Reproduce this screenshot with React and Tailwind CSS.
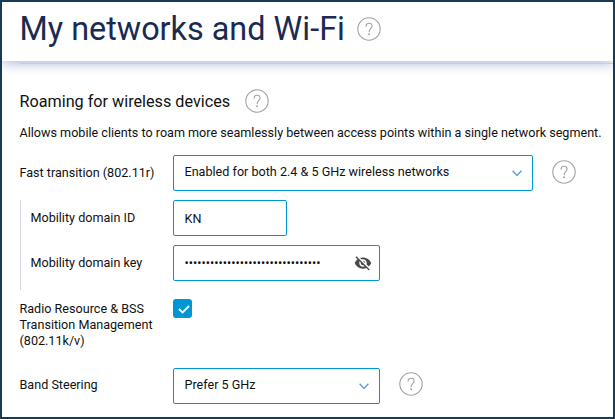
import { useState } from 'react';
import { MdVisibilityOff } from 'react-icons/md';

function HelpIcon() {
  return (
    <svg
      className="size-6 shrink-0 text-[#a3a3a3]"
      viewBox="0 0 24 24"
      fill="none"
      stroke="currentColor"
      strokeWidth="1.1"
      strokeLinecap="round"
    >
      <circle cx="12" cy="12" r="11.2" />
      <path d="M9.1 9.2c0-1.8 1.2-3 3-3s3 1.2 3 2.9c0 2.4-3 2.8-3 5.7" />
      <circle cx="12.1" cy="17.2" r="0.45" />
    </svg>
  );
}

function Select({ value, className }) {
  return (
    <button
      type="button"
      className={`flex h-9 items-center justify-between rounded-[2px] border border-[#0096d6] bg-white pr-2.5 pl-[10.5px] text-left ${className}`}
    >
      <span className="-mt-0.5">{value}</span>
      <svg
        className="mt-px h-[7px] w-[10px]"
        viewBox="0 0 10 7"
        fill="none"
        stroke="#5b9bd5"
        strokeWidth="1.3"
      >
        <path d="M0.6 0.8 5 5.5 9.4 0.8" />
      </svg>
    </button>
  );
}

export default function App() {
  const [domainId, setDomainId] = useState('KN');
  const [domainKey, setDomainKey] = useState('0123456789abcdef0123456789abcdef');
  const [showKey, setShowKey] = useState(false);
  const [management, setManagement] = useState(true);

  return (
    <div className="h-[419px] w-[615px] overflow-hidden border-2 border-[#173a56] bg-white font-[Roboto,sans-serif] text-[12.6px] leading-4 text-[#111]">
      <header className="flex h-[59px] items-center gap-3 pb-[5px] pl-[17.5px] shadow-[0_2px_12px_#aab3d8]">
        <h1 className="text-[32.4px] leading-[40px] text-[#1a2b52]">My networks and Wi-Fi</h1>
        <HelpIcon />
      </header>

      <main className="pl-[17.5px]">
        <div className="mt-0.5 h-px bg-[#c3cbdc]" />
        <div className="mt-[25px] flex h-6 items-center gap-[15px]">
          <h2 className="mt-0.5 text-[16.2px] leading-6">Roaming for wireless devices</h2>
          <HelpIcon />
        </div>
        <p className="mt-3 whitespace-nowrap">
          Allows mobile clients to roam more seamlessly between access points within a single network segment.
        </p>

        <div className="mt-[14px] flex items-center">
          <span className="w-[153.5px]">Fast transition (802.11r)</span>
          <Select value="Enabled for both 2.4 & 5 GHz wireless networks" className="mr-[19px] w-[360px]" />
          <div className="-mt-[3px]">
            <HelpIcon />
          </div>
        </div>

        <div className="mt-[9px] ml-[0.5px] h-[90px] space-y-[9px] border-l border-[#d0d6e4] pl-[9.5px]">
          <label className="flex items-center">
            <span className="w-[142.5px]">Mobility domain ID</span>
            <input
              value={domainId}
              onChange={(e) => setDomainId(e.target.value)}
              className="h-9 w-[114px] rounded-[2px] border border-[#0096d6] px-[10.5px] outline-none"
            />
          </label>
          <div className="flex items-center">
            <span className="w-[142.5px]">Mobility domain key</span>
            <div className="flex h-9 w-[207px] items-center rounded-[2px] border border-[#0096d6] pr-[7px] pl-[10.5px]">
              <input
                type={showKey ? 'text' : 'password'}
                value={domainKey}
                onChange={(e) => setDomainKey(e.target.value)}
                className="min-w-0 flex-1 outline-none"
              />
              <button type="button" onClick={() => setShowKey(!showKey)}>
                <MdVisibilityOff className="size-[18px] text-[#484848]" />
              </button>
            </div>
          </div>
        </div>

        <div className="mt-[9px] flex items-start">
          <span className="mt-0.5 w-[153.5px] pr-4">Radio Resource &amp; BSS Transition Management (802.11k/v)</span>
          <button
            type="button"
            onClick={() => setManagement(!management)}
            className="flex size-[19px] items-center justify-center rounded-[3px] bg-[#0096d6]"
          >
            {management && (
              <svg className="mt-0.5 ml-0.5 h-[9px] w-[12px]" viewBox="0 0 12 9" fill="none" stroke="#fff" strokeWidth="1.8">
                <path d="M1 4 4.6 7.5 11 1" />
              </svg>
            )}
          </button>
        </div>

        <div className="mt-[19px] flex items-center">
          <span className="-mt-0.5 w-[153.5px]">Band Steering</span>
          <Select value="Prefer 5 GHz" className="mr-[19px] w-[207px]" />
          <div className="-mt-1">
            <HelpIcon />
          </div>
        </div>
      </main>
    </div>
  );
}
